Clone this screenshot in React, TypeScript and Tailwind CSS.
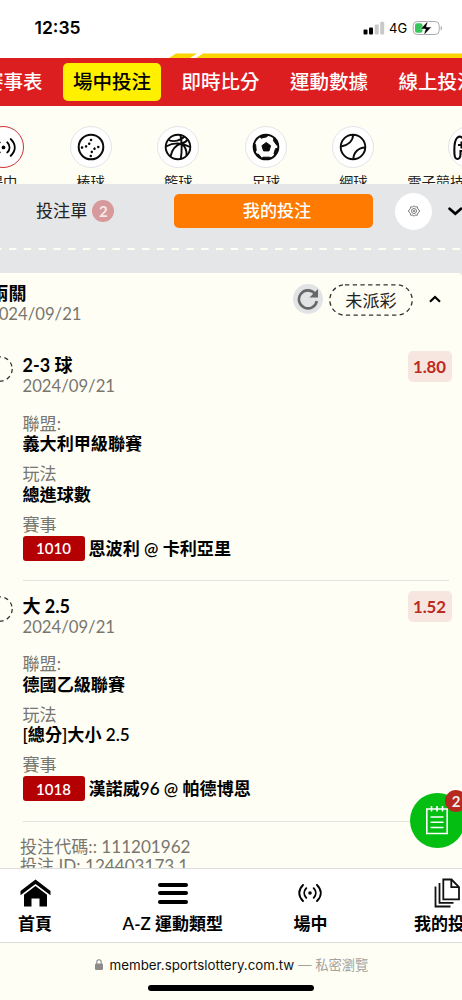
import type { ReactNode } from 'react'

const tabs = ['賽事表', '場中投注', '即時比分', '運動數據', '線上投注']

const legs = [
  {
    pick: '2-3 球',
    date: '2024/09/21',
    odds: '1.80',
    league: '義大利甲級聯賽',
    market: '總進球數',
    code: '1010',
    match: '恩波利 @ 卡利亞里',
  },
  {
    pick: '大 2.5',
    date: '2024/09/21',
    odds: '1.52',
    league: '德國乙級聯賽',
    market: '[總分]大小 2.5',
    code: '1018',
    match: '漢諾威96 @ 帕德博恩',
  },
]

function LiveIcon({ className }: { className?: string }) {
  return (
    <svg viewBox="0 0 24 20" className={className} fill="none" stroke="currentColor" strokeWidth="1.9" strokeLinecap="round">
      <path d="M5 2C0 7 0 13 5 18M8.3 5.2C5.6 8 5.6 12 8.3 14.8M19 2c5 5 5 11 0 16M15.7 5.2c2.7 2.8 2.7 6.8 0 9.6" />
      <circle cx="12" cy="10" r="1.8" fill="currentColor" stroke="none" />
    </svg>
  )
}

function BaseballIcon() {
  return (
    <svg viewBox="0 0 28 28" className="size-7" fill="none" stroke="#0b0b0b">
      <circle cx="14" cy="14" r="12.3" strokeWidth="2" />
      <path d="M5 14.6C9.5 14.5 14 10.5 14.4 5M13.8 23C13.8 18 18 13.7 23.5 13.7" strokeWidth="2.5" strokeLinecap="round" strokeDasharray="0.1 4.1" />
    </svg>
  )
}

function BasketballIcon() {
  return (
    <svg viewBox="0 0 28 28" className="size-7" fill="none" stroke="#0b0b0b" strokeWidth="1.9">
      <circle cx="14" cy="14" r="12.3" />
      <path d="M16.5 2C17.8 9 18 18 16.8 26M2 13.5C9 9.5 18 9.5 26 14M4.5 7C10 9.5 17 7.5 20.5 3.5M6.5 23.5C8 16.5 11.5 12 17.5 10.5 20.5 9.8 22.5 8.5 23.5 6.5M17.5 10.5C21 13.5 23 18 22.5 22.5" />
    </svg>
  )
}

function FootballIcon() {
  return (
    <svg viewBox="0 0 28 28" className="size-7">
      <circle cx="14" cy="14" r="12.3" fill="none" stroke="#0b0b0b" strokeWidth="2" />
      <g fill="#0b0b0b" stroke="#0b0b0b" strokeLinejoin="round">
        <path d="m14.3 9.5 4.3 3.2-1.6 5.200h-5.400L9.900 12.700z" />
        <path d="M8 3.500c3-2 6-2 8-1.500l-1 1.700-6 1.500zM22 5l3.500 6-.6 1.300-3.400-4.600zM26 15.500l-3 7-1-1.800 1.500-5zM19 25.200c-3 1.600-7 1.500-9.500.6l1.500-1.600h6.500zM2 10l1.600 1.500.6 6L3 19.500c-1.500-3-1.700-6-1-9.500zM4.500 21l2 .2 2.700 3.300z" />
      </g>
    </svg>
  )
}

function TennisIcon() {
  return (
    <svg viewBox="0 0 28 28" className="size-7" fill="none" stroke="#0b0b0b" strokeWidth="1.9">
      <circle cx="14" cy="14" r="12.3" />
      <path d="M2 13.5C9 12.5 14 8 14.2 1.8M14.5 26.2C14 20 19.5 14.5 26.2 14.5" />
    </svg>
  )
}

function GamepadIcon() {
  return (
    <svg viewBox="0 0 32 28" className="h-7 w-8 shrink-0" fill="none" stroke="#0b0b0b" strokeWidth="2.1">
      <path d="M4.500 4.500C6.500 3 9 3.500 10 6h12c1-2.500 3.500-3 5.500-1.500 3 2.500 4 9 3.500 17 0 6-5 6-5.500 0V18H7.500v3.500c-.5 6-5.500 6-6 0-.5-8 0-14.500 3-17z" />
      <path d="M8.500 8.500v7M5 12h7" />
    </svg>
  )
}

function SportItem({ name, active, icon }: { name: string; active?: boolean; icon: ReactNode }) {
  return (
    <div className="flex w-[87.6px] shrink-0 flex-col items-center">
      <div
        className={
          active
            ? 'flex size-[42px] shrink-0 items-center justify-center rounded-full border-[1.5px] border-[#cf3136] bg-white'
            : 'flex size-[42px] shrink-0 items-center justify-center rounded-full border border-[#e4e4e7] bg-white'
        }
      >
        {icon}
      </div>
      <span className="mt-[4.5px] whitespace-nowrap text-[14.3px] leading-[20px] text-[#222]">{name}</span>
    </div>
  )
}

function Field({ label, children }: { label: string; children: ReactNode }) {
  return (
    <div className="mb-[9.9px]">
      <div className="h-[20.5px] leading-[21px] text-[#77766f]">{label}</div>
      <div className="h-5 font-semibold leading-[22px]">{children}</div>
    </div>
  )
}

function Leg({ leg }: { leg: (typeof legs)[number] }) {
  return (
    <div className="flex h-[240.7px]">
      <svg viewBox="0 0 26 26" className="-ml-[13.5px] mt-[15.5px] size-[26px] shrink-0" fill="none">
        <circle cx="13" cy="13" r="12.2" stroke="#333" strokeWidth="1.3" strokeDasharray="4.2 3.5" />
      </svg>
      <div className="relative ml-[10px] mr-[13px] flex-1 border-b border-[#e6e3de] pt-[15px]">
        <div className="h-5 text-[18px] font-bold leading-[21px]">{leg.pick}</div>
        <div className="mb-[17.5px] h-5 text-[16.7px] leading-[23px] text-[#77766f]">{leg.date}</div>
        <Field label="聯盟:">{leg.league}</Field>
        <Field label="玩法">{leg.market}</Field>
        <div className="h-5 leading-[21px] text-[#77766f]">賽事</div>
        <div className="mt-[2px] flex h-[25px] items-center">
          <span className="flex h-[25px] w-[62px] items-center justify-center rounded-[3px] bg-[#b50003] text-[15px] font-semibold text-white">
            {leg.code}
          </span>
          <span className="ml-[4px] pt-px font-semibold">{leg.match}</span>
        </div>
        <span className="absolute -right-[2.5px] top-[10.5px] flex h-[31px] w-11 items-center justify-center rounded-[5px] bg-[#f7e5df] text-[16.8px] font-bold text-[#bd2a21]">
          {leg.odds}
        </span>
      </div>
    </div>
  )
}

function NavItem({ label, icon }: { label: string; icon: ReactNode }) {
  return (
    <div className="flex w-[137.7px] shrink-0 flex-col items-center">
      <div className="flex h-[30px] items-center">{icon}</div>
      <span className="mt-[4px] whitespace-nowrap text-[17px] font-semibold leading-6">{label}</span>
    </div>
  )
}

export default function App() {
  return (
    <div className="flex h-[1000px] w-[462px] flex-col overflow-hidden bg-[#fffef5] font-[Lato,'Noto_Sans_CJK_TC',sans-serif] text-[17.1px] text-black">
      <header className="relative flex h-[58px] shrink-0 justify-between bg-white font-[Inter,sans-serif]">
        <span className="ml-[34.5px] mt-[16px] text-[17.5px] font-semibold leading-6">12:35</span>
        <div className="mr-[19px] mt-[19px] flex h-[18px] items-center">
          <svg viewBox="0 0 22 14" className="mr-[4px] h-[14px] w-[22px]">
            <rect x="0.5" y="8.5" width="4" height="5" rx="1" />
            <rect x="6" y="6.5" width="4" height="7" rx="1" />
            <rect x="11.7" y="3.5" width="4" height="10" rx="1" fill="#c9c9cb" />
            <rect x="17.2" y="0.7" width="4" height="12.8" rx="1" fill="#c9c9cb" />
          </svg>
          <span className="w-[23px] pt-px text-[13px]">4G</span>
          <svg viewBox="0 0 31 16" className="h-4 w-[31px]">
            <rect x="1.2" y="1.5" width="26" height="13" rx="4" fill="none" stroke="#aaaaac" />
            <rect x="3" y="3.3" width="7.5" height="9.4" rx="2" fill="#35c759" />
            <path d="M28.7 6v4.5c1.7-.5 1.7-4 0-4.5z" fill="#aaaaac" />
            <path d="M16 1 8.5 9h5l-1.8 6.3L19.5 7h-5.2z" stroke="#fff" strokeWidth="0.5" />
          </svg>
        </div>
        <svg viewBox="0 0 293 5" className="absolute bottom-0 left-[169px] h-[5px] w-[293px]" fill="#fbd400">
          <path d="M0 5 7 .5 28 .5 21 5zM27 5 34 .5H293V5z" />
        </svg>
      </header>

      <nav className="flex h-[48px] shrink-0 items-center gap-[10.5px] bg-[#dd1e20] text-[19.5px] font-medium text-white">
        {tabs.map((tab) => (
          <span
            key={tab}
            className={
              tab === '場中投注'
                ? 'flex h-[38px] shrink-0 items-center rounded-[5px] bg-[#fff000] px-[10px] text-black'
                : 'flex h-[38px] shrink-0 items-center px-[10px] first:-ml-[26.1px]'
            }
          >
            {tab}
          </span>
        ))}
      </nav>

      <section className="flex h-[78px] shrink-0 overflow-hidden pt-[20px]">
        <div className="-ml-[40.8px] flex">
          <SportItem name="場中" active icon={<LiveIcon className="w-[25px]" />} />
          <SportItem name="棒球" icon={<BaseballIcon />} />
          <SportItem name="籃球" icon={<BasketballIcon />} />
          <SportItem name="足球" icon={<FootballIcon />} />
          <SportItem name="網球" icon={<TennisIcon />} />
        </div>
        <div className="ml-[10px] shrink-0">
          <div className="ml-[41px] flex size-[42px] items-center justify-center rounded-full border border-[#e4e4e7] bg-white">
            <GamepadIcon />
          </div>
          <div className="mt-[4.5px] whitespace-nowrap text-[14.3px] leading-[20px] text-[#222]">電子競技</div>
        </div>
      </section>

      <section className="h-[89px] shrink-0 bg-[#e5e6e8] pt-[8px]">
        <div className="flex h-[38px] items-center">
          <div className="flex w-[174px] items-center pl-[36px] text-[#222]">
            <span>投注單</span>
            <span className="ml-[5px] flex size-[22px] items-center justify-center rounded-full bg-[#d7999b] text-[15px] font-bold text-[#f4e9ea]">
              2
            </span>
          </div>
          <div className="flex h-[34px] w-[199px] items-center justify-center rounded-[5px] bg-[#ff7a00] pl-[7px] font-medium text-white">
            我的投注
          </div>
          <div className="ml-[22px] flex size-[37px] items-center justify-center rounded-full bg-white">
            <svg viewBox="0 0 24 24" className="size-[12px]" fill="none" stroke="#666" strokeWidth="1.7">
              <path d="M9.5 4 12 1.5 14.5 4 18.5 3.5 19.5 7.5 22.5 10v4l-3 2.5-1 4-4-.5L12 22.5 9.5 20l-4 .5-1-4L1.5 14v-4l3-2.5 1-4z" />
              <circle cx="12" cy="12" r="5" />
              <circle cx="12" cy="12" r="1.5" />
            </svg>
          </div>
          <svg viewBox="0 0 14 9" className="ml-[16px] mt-px h-[9px] w-[14px] shrink-0" fill="none" stroke="#000" strokeWidth="2.7" strokeLinecap="round">
            <path d="m1.6 1.7 5.7 5 5.7-5" />
          </svg>
        </div>
        <svg viewBox="0 0 462 2" className="mt-[18px] h-[2px] w-full">
          <path d="M-5.7 1H462" stroke="#fffef5" strokeWidth="2" strokeDasharray="7.3 7.48" />
        </svg>
      </section>

      <div className="min-h-0 flex-1 overflow-hidden bg-[#e5e6e8]">
        <div className="h-full rounded-tr-[4px] bg-[#fffef5]">
          <div className="flex h-[67.3px]">
            <div className="-ml-[11px] w-[304.5px] shrink-0 pt-[10px]">
              <div className="ml-[1.5px] h-5 text-[18px] font-semibold leading-5">兩關</div>
              <div className="h-5 text-[16.7px] leading-[23px] text-[#77766f]">2024/09/21</div>
            </div>
            <div className="mt-[10.5px] flex h-[32px] items-center">
              <div className="-ml-[0.5px] -mt-[2px] flex size-[30px] items-center justify-center rounded-full bg-[#e2e3e5]">
                <svg viewBox="0 0 22 22" className="size-[22px]">
                  <path d="M17.8 5.5A9 9 0 1 0 19.8 13" fill="none" stroke="#666768" strokeWidth="2.6" />
                  <path d="M21 1v8.5h-8.5z" fill="#666768" />
                </svg>
              </div>
              <div className="relative ml-[6px] flex h-[32px] w-[84px] items-center justify-center">
                <svg viewBox="0 0 84 32" className="absolute inset-0 h-full w-full" fill="none">
                  <rect x="0.8" y="0.8" width="82.4" height="30.4" rx="15.2" stroke="#333" strokeWidth="1.3" strokeDasharray="4.3 3.4" />
                </svg>
                <span className="pt-[2px] text-[#222]">未派彩</span>
              </div>
              <svg viewBox="0 0 12 8" className="-mt-px ml-[16px] h-[8px] w-[12px]" fill="none" stroke="#000" strokeWidth="2.2">
                <path d="M1 6.7 6 2l5 4.7" />
              </svg>
            </div>
          </div>
          {legs.map((leg) => (
            <Leg key={leg.code} leg={leg} />
          ))}
          <div className="ml-5 pt-[15.5px] text-[#77766f]">
            <div className="h-[18.5px] leading-[20px]">投注代碼:: 111201962</div>
            <div className="h-[18.5px] leading-[20px]">投注 ID: 124403173.1</div>
          </div>
        </div>
      </div>

      <div className="relative h-[75px] shrink-0 border-y border-[#dddddb] bg-white pt-[9px]">
        <div className="-ml-[33.8px] flex">
          <NavItem
            label="首頁"
            icon={
              <svg viewBox="0 0 31 28" className="h-7 w-[31px]">
                <path d="M15.5.5 30.5 12v4.3L15.5 5 .5 16.3V12z" />
                <path d="M15.5 7 27 15.8V27.5H19.5V19.5h-8v8H4V15.8z" />
              </svg>
            }
          />
          <NavItem
            label="A-Z 運動類型"
            icon={
              <div className="flex flex-col gap-[4.5px]">
                <i className="h-[4px] w-[30px] rounded-full bg-black" />
                <i className="h-[4px] w-[30px] rounded-full bg-black" />
                <i className="h-[4px] w-[30px] rounded-full bg-black" />
              </div>
            }
          />
          <NavItem label="場中" icon={<LiveIcon className="w-6" />} />
          <NavItem
            label="我的投注"
            icon={
              <svg viewBox="0 0 27 30" className="-ml-[2px] h-[30px] w-[27px]" fill="none" stroke="#111" strokeWidth="1.8">
                <path d="M9.3 1.5h8.2l7.5 7.5v12.3H9.3z" />
                <path d="M17.3 1.5v7.7H25M5.5 5v19.8h14M1.5 8.5v20h15" />
              </svg>
            }
          />
        </div>
        <div className="absolute -top-[76.5px] left-[409.5px] flex size-[55px] items-center justify-center rounded-full bg-[#04be12]">
          <svg viewBox="0 0 24 30" className="h-[30px] w-6" fill="none" stroke="#fff" strokeWidth="1.6">
            <path d="M1.8 4h20.4v24.5H1.8zM6.5 1v5.5M12 1v5.5M17.5 1v5.5M5.5 12h13M5.5 17.2h13M5.5 22.5h13" />
          </svg>
          <span className="absolute -top-[2.5px] left-[35.5px] flex size-[22px] items-center justify-center rounded-full bg-[#b5291f] text-[15px] font-bold text-[#eee]">
            2
          </span>
        </div>
      </div>

      <footer className="flex h-[57px] shrink-0 flex-col font-[Inter,'Noto_Sans_CJK_TC',sans-serif] text-[13.35px]">
        <div className="mt-[11.5px] flex h-5 items-center pl-[95px]">
          <svg viewBox="0 0 8 11" className="mr-[6.5px] h-[11px] w-2">
            <rect y="4.5" width="8" height="6.5" rx="1.2" fill="#8b8b89" />
            <path d="M1.8 5V3c0-3 4.4-3 4.4 0v2" fill="none" stroke="#8b8b89" strokeWidth="1.1" />
          </svg>
          <span className="whitespace-nowrap text-[#111]">member.sportslottery.com.tw</span>
          <span className="ml-[4px] whitespace-nowrap tracking-[-0.1px] text-[#a3a29d]">— 私密瀏覽</span>
        </div>
        <div className="ml-[148px] mt-[10.5px] h-[6px] w-[166px] rounded-full bg-black" />
      </footer>
    </div>
  )
}
